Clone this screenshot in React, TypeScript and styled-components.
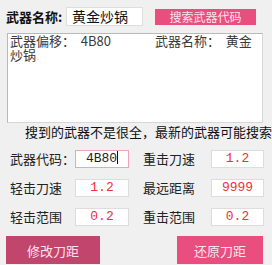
import React from "react";
import styled, { createGlobalStyle } from "styled-components";

const Global = createGlobalStyle`
  html, body { margin: 0; padding: 0; background: #f0f0f0; }
  body { font-family: "Noto Sans CJK SC", "Noto Sans", sans-serif; color: #222; }
  * { box-sizing: border-box; }
`;

const Page = styled.div`
  width: 272px;
  height: 265px;
  overflow: hidden;
  background: #f0f0f0;
  display: flex;
  flex-direction: column;
`;

const TopBar = styled.div`
  display: flex;
  align-items: center;
  height: 19px;
  margin-top: 7px;
  padding-left: 6px;
`;

const BoldLabel = styled.span`
  font-size: 13px;
  font-weight: 700;
  width: 60px;
  line-height: 19px;
  color: #111;
`;

const NameInput = styled.div`
  width: 77px;
  height: 19px;
  background: #fff;
  border: 1px solid #dedede;
  font-size: 14px;
  line-height: 17px;
  padding-left: 5px;
  color: #111;
`;

const PinkButton = styled.button<{ $dark?: boolean }>`
  border: none;
  padding: 0;
  margin: 0;
  background: ${(p) => (p.$dark ? "#c2456d" : "#e94e7e")};
  color: #fbe4ec;
  font-family: "Noto Sans CJK SC", sans-serif;
  font-size: 12px;
  display: flex;
  align-items: center;
  justify-content: center;
`;

const SearchButton = styled(PinkButton)`
  width: 101px;
  height: 16px;
  margin-left: 12px;
`;

const Memo = styled.div`
  margin: 7px 0 0 7px;
  width: 256px;
  height: 90px;
  background: #fff;
  border: 1px solid #b9b9b9;
  border-right-color: #d6d6d6;
  border-bottom-color: #d6d6d6;
  padding: 0 0 0 2px;
  font-size: 13px;
  line-height: 14px;
  color: #3a3a3a;
`;

const MemoLine = styled.div`
  display: flex;
  white-space: pre;
`;

const MemoCell = styled.span<{ $w?: number }>`
  width: ${(p) => (p.$w ? `${p.$w}px` : "auto")};
  flex: none;
`;

const Notice = styled.div`
  margin-top: 1px;
  padding-left: 25px;
  height: 16px;
  font-size: 13px;
  line-height: 16px;
  white-space: nowrap;
  overflow: hidden;
  color: #111;
`;

const Fields = styled.div`
  display: grid;
  grid-template-columns: 119px 121px;
  column-gap: 14px;
  row-gap: 11px;
  padding-left: 10px;
  margin-top: 9px;
`;

const Field = styled.div<{ $labelWidth: number }>`
  display: grid;
  grid-template-columns: ${(p) => p.$labelWidth}px 1fr;
  align-items: center;
  height: 18px;
`;

const FieldLabel = styled.span`
  font-size: 13px;
  color: #222;
`;

const ValueBox = styled.div<{ $focused?: boolean }>`
  height: 18px;
  background: #fff;
  border: 1px solid ${(p) => (p.$focused ? "#eda4bd" : "#dddddd")};
  font-family: "Liberation Mono", "DejaVu Sans Mono", monospace;
  font-size: 13px;
  line-height: 16px;
  text-align: center;
  color: ${(p) => (p.$focused ? "#222" : "#f0303a")};
`;

const Caret = styled.span`
  display: inline-block;
  width: 1px;
  height: 13px;
  background: #111;
  vertical-align: -2px;
`;

const Actions = styled.div`
  display: flex;
  justify-content: space-between;
  padding: 0 9px 0 6px;
  margin-top: 11px;
`;

const ActionButton = styled(PinkButton)<{ $w: number }>`
  width: ${(p) => p.$w}px;
  height: 28px;
  font-size: 13px;
`;

export default function App() {
  return (
    <Page>
      <Global />
      <TopBar>
        <BoldLabel>武器名称:</BoldLabel>
        <NameInput>黄金炒锅</NameInput>
        <SearchButton>搜索武器代码</SearchButton>
      </TopBar>
      <Memo>
        <MemoLine>
          <MemoCell $w={145}>{"武器偏移：  4B80"}</MemoCell>
          <MemoCell>{"武器名称：  黄金"}</MemoCell>
        </MemoLine>
        <MemoLine>炒锅</MemoLine>
      </Memo>
      <Notice>搜到的武器不是很全，最新的武器可能搜索不到</Notice>
      <Fields>
        <Field $labelWidth={65}>
          <FieldLabel>武器代码：</FieldLabel>
          <ValueBox $focused>
            4B80
            <Caret />
          </ValueBox>
        </Field>
        <Field $labelWidth={68}>
          <FieldLabel>重击刀速</FieldLabel>
          <ValueBox>1.2</ValueBox>
        </Field>
        <Field $labelWidth={65}>
          <FieldLabel>轻击刀速</FieldLabel>
          <ValueBox>1.2</ValueBox>
        </Field>
        <Field $labelWidth={68}>
          <FieldLabel>最远距离</FieldLabel>
          <ValueBox>9999</ValueBox>
        </Field>
        <Field $labelWidth={65}>
          <FieldLabel>轻击范围</FieldLabel>
          <ValueBox>0.2</ValueBox>
        </Field>
        <Field $labelWidth={68}>
          <FieldLabel>重击范围</FieldLabel>
          <ValueBox>0.2</ValueBox>
        </Field>
      </Fields>
      <Actions>
        <ActionButton $dark $w={94}>修改刀距</ActionButton>
        <ActionButton $w={86}>还原刀距</ActionButton>
      </Actions>
    </Page>
  );
}
